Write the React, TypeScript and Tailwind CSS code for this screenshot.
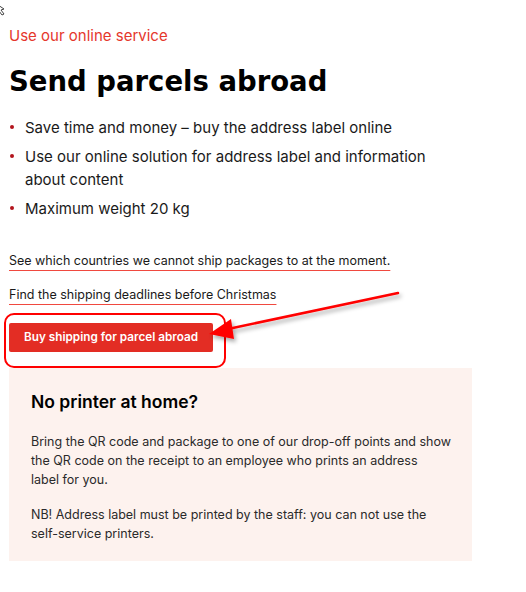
export default function App() {
  const bullets = [
    "Save time and money – buy the address label online",
    "Use our online solution for address label and information about content",
    "Maximum weight 20 kg",
  ];

  return (
    <div className="relative min-h-[592px] w-[526px] bg-white font-['Inter','Liberation_Sans',sans-serif] text-[#1a1a1a]">
      {/* cursor remnant top-left */}
      <svg className="absolute left-0 top-[4px]" width="6" height="12" viewBox="0 0 6 12">
        <path d="M-2 1 L4 5 L1 6 L4 10 L2 11 L-1 7 Z" fill="white" stroke="#444" strokeWidth="1" />
      </svg>

      <div className="w-[472px] pl-[9px] pt-[24px]">
        <p className="text-[15px] leading-6 text-[#e5372c]">Use our online service</p>

        <h1 className="mt-[16px] font-['DejaVu_Sans',sans-serif] text-[27.5px] font-bold leading-[34px] text-black">
          Send parcels abroad
        </h1>

        <ul className="mt-[18px] flex w-[450px] flex-col gap-[6px]">
          {bullets.map((b) => (
            <li key={b} className="flex text-[15px] leading-[23px]">
              <span className="mt-[9px] mr-[11px] ml-[1px] h-[4px] w-[4px] shrink-0 rounded-full bg-[#b3141c]" />
              <span>{b}</span>
            </li>
          ))}
        </ul>

        <div className="mt-[31px] flex flex-col items-start gap-[14px] pb-[1px] text-[12.5px] leading-5">
          <a className="text-[#1a1a1a] underline decoration-[#f0493f] decoration-1 underline-offset-[5px]">
            See which countries we cannot ship packages to at the moment.
          </a>
          <a className="text-[#1a1a1a] underline decoration-[#f0493f] decoration-1 underline-offset-[5px]">
            Find the shipping deadlines before Christmas
          </a>
        </div>

        <div className="relative mt-[17px] flex w-fit">
          <button className="h-[29px] w-[204px] rounded-[2px] bg-[#e32d24] text-[11.75px] font-semibold text-white">
            Buy shipping for parcel abroad
          </button>
          <div className="absolute left-[-5px] top-[-10px] h-[55px] w-[222px] rounded-[10px] border-2 border-[#f00]" />
        </div>

        <div className="mt-[16px] h-[193px] w-[463px] bg-[#fdf2ee] pl-[22px] pr-[10px] pt-[22px]">
          <h2 className="text-[17.5px] font-semibold leading-6 text-black">No printer at home?</h2>
          <p className="mt-[18px] text-[12.5px] leading-[19px] text-[#2a2a2a]">
            Bring the QR code and package to one of our drop-off points and show
            <br />
            the QR code on the receipt to an employee who prints an address
            <br />
            label for you.
          </p>
          <p className="mt-[16px] text-[12.5px] leading-[19px] text-[#2a2a2a]">
            NB! Address label must be printed by the staff: you can not use the
            <br />
            self-service printers.
          </p>
        </div>
      </div>

      {/* annotation arrow */}
      <svg className="pointer-events-none absolute left-0 top-0" width="526" height="592" viewBox="0 0 526 592">
        <defs>
          <filter id="sh" x="-20%" y="-50%" width="140%" height="200%">
            <feDropShadow dx="2" dy="3" stdDeviation="2" floodColor="#000" floodOpacity="0.35" />
          </filter>
        </defs>
        <g filter="url(#sh)">
          <line x1="398" y1="293" x2="228" y2="329" stroke="#f00" strokeWidth="2.5" strokeLinecap="round" />
          <path d="M209 334 L231 319 L234 339 Z" fill="#f00" />
        </g>
      </svg>
    </div>
  );
}
